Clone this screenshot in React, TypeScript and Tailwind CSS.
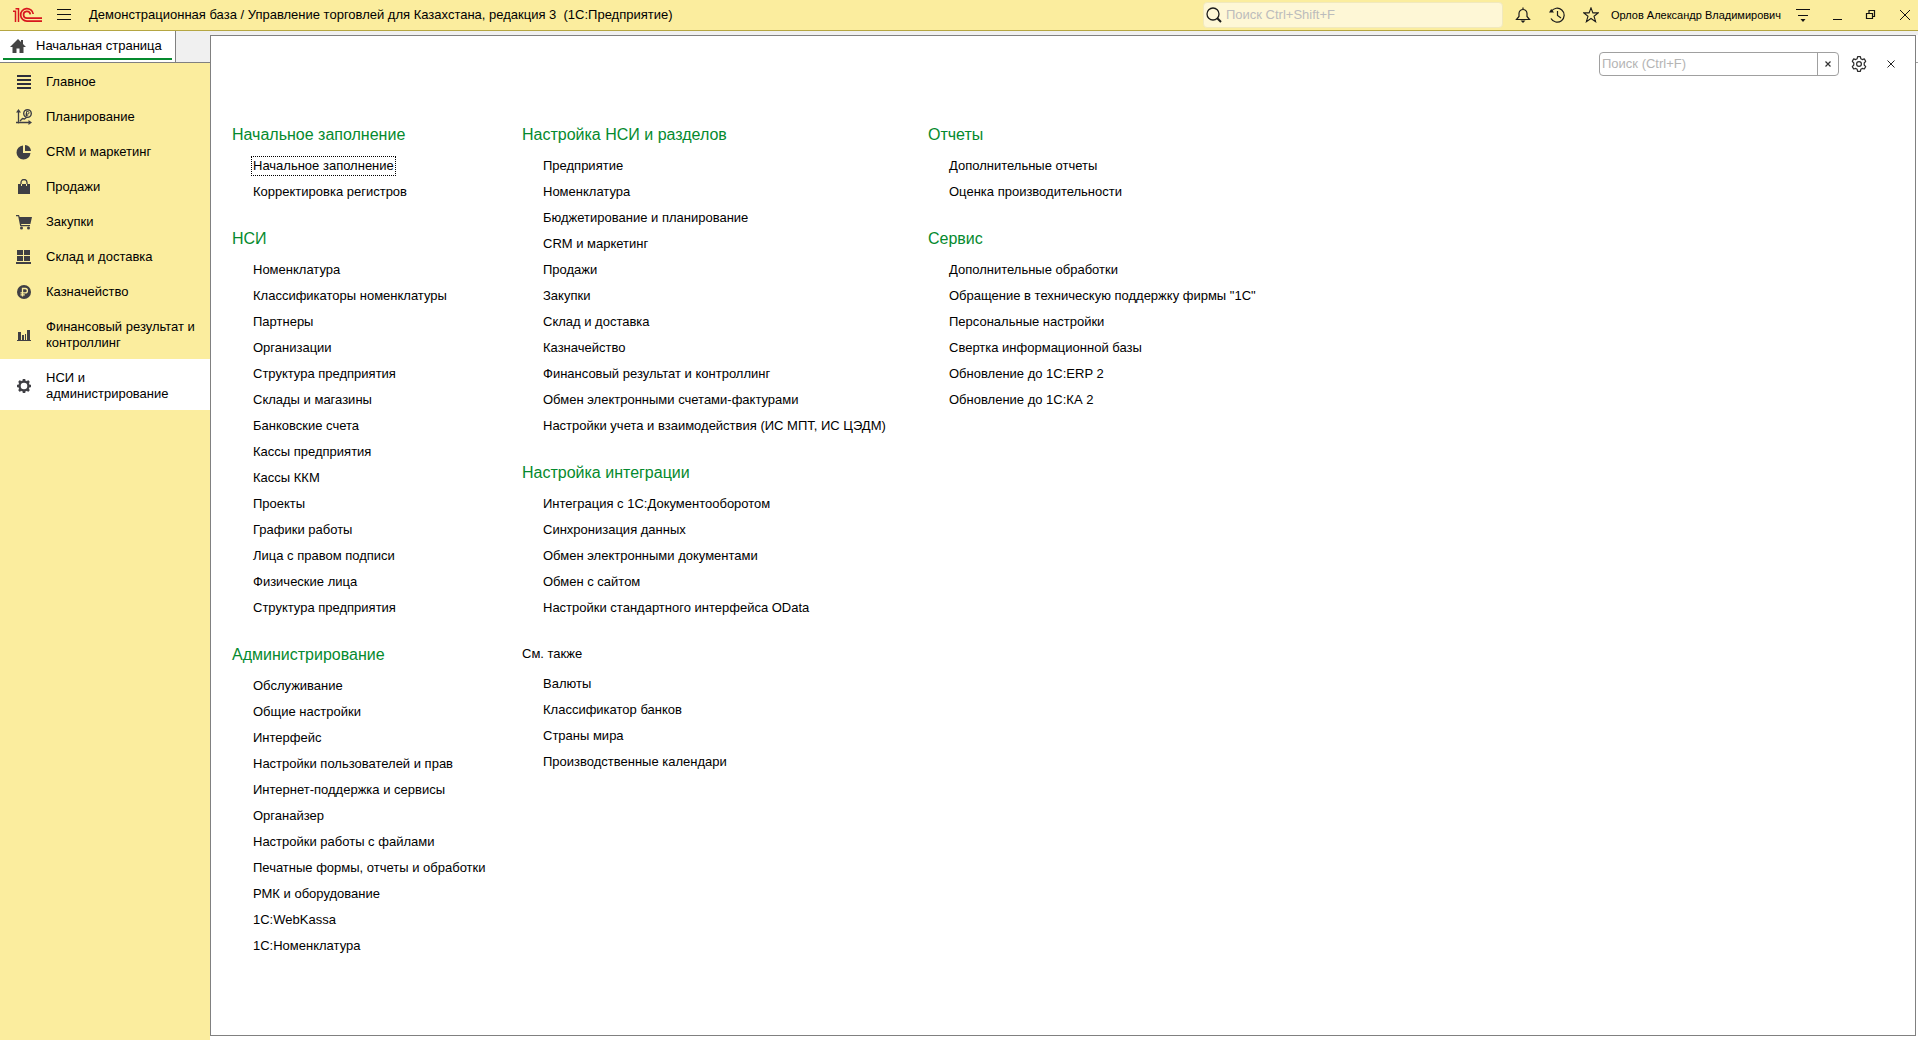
import type { ReactNode } from "react";

type Section = { title: string; muted?: boolean; items: string[] };

const columns: Section[][] = [
  [
    { title: "Начальное заполнение", items: ["Начальное заполнение", "Корректировка регистров"] },
    {
      title: "НСИ",
      items: [
        "Номенклатура",
        "Классификаторы номенклатуры",
        "Партнеры",
        "Организации",
        "Структура предприятия",
        "Склады и магазины",
        "Банковские счета",
        "Кассы предприятия",
        "Кассы ККМ",
        "Проекты",
        "Графики работы",
        "Лица с правом подписи",
        "Физические лица",
        "Структура предприятия",
      ],
    },
    {
      title: "Администрирование",
      items: [
        "Обслуживание",
        "Общие настройки",
        "Интерфейс",
        "Настройки пользователей и прав",
        "Интернет-поддержка и сервисы",
        "Органайзер",
        "Настройки работы с файлами",
        "Печатные формы, отчеты и обработки",
        "РМК и оборудование",
        "1С:WebKassa",
        "1С:Номенклатура",
      ],
    },
  ],
  [
    {
      title: "Настройка НСИ и разделов",
      items: [
        "Предприятие",
        "Номенклатура",
        "Бюджетирование и планирование",
        "CRM и маркетинг",
        "Продажи",
        "Закупки",
        "Склад и доставка",
        "Казначейство",
        "Финансовый результат и контроллинг",
        "Обмен электронными счетами-фактурами",
        "Настройки учета и взаимодействия (ИС МПТ, ИС ЦЭДМ)",
      ],
    },
    {
      title: "Настройка интеграции",
      items: [
        "Интеграция с 1С:Документооборотом",
        "Синхронизация данных",
        "Обмен электронными документами",
        "Обмен с сайтом",
        "Настройки стандартного интерфейса OData",
      ],
    },
    {
      title: "См. также",
      muted: true,
      items: ["Валюты", "Классификатор банков", "Страны мира", "Производственные календари"],
    },
  ],
  [
    { title: "Отчеты", items: ["Дополнительные отчеты", "Оценка производительности"] },
    {
      title: "Сервис",
      items: [
        "Дополнительные обработки",
        'Обращение в техническую поддержку фирмы "1С"',
        "Персональные настройки",
        "Свертка информационной базы",
        "Обновление до 1С:ERP 2",
        "Обновление до 1С:КА 2",
      ],
    },
  ],
];

function Icon({ children, className = "size-4", box = 16 }: { children: ReactNode; className?: string; box?: number }) {
  return (
    <svg viewBox={`0 0 ${box} ${box}`} className={`shrink-0 ${className}`} fill="none" stroke="none" aria-hidden="true">
      {children}
    </svg>
  );
}

const dark = "#3f3f44";

const navigation: { label: string; icon: ReactNode; active?: boolean }[] = [
  {
    label: "Главное",
    icon: <path fill="#2e2e3c" d="M1 1h14v2H1zM1 5h14v2H1zM1 9h14v2H1zM1 13h14v2H1z" />,
  },
  {
    label: "Планирование",
    icon: (
      <>
        <path stroke={dark} strokeWidth="1.3" d="M2.5 2v12.500M0 13.500h14M4 12l2.500-2.500 2 .5L11 8" />
        <path fill={dark} d="M2.500 0 5 3.500H0zM16 13.500 12.500 11v5z" />
        <circle cx="11.500" cy="4.500" r="3.800" stroke={dark} strokeWidth="1.400" />
        <path stroke={dark} d="M10.500 7V2.500h1.300a1.200 1.200 0 0 1 0 2.500H9.500M9.500 6.200h2.700" />
      </>
    ),
  },
  {
    label: "CRM и маркетинг",
    icon: (
      <>
        <path fill={dark} d="M7 1.500V9h7.500A7 7 0 1 1 7 1.500z" />
        <path fill={dark} d="M9 1v6h6a6.200 6.200 0 0 0-6-6z" />
      </>
    ),
  },
  {
    label: "Продажи",
    icon: (
      <>
        <path fill={dark} d="M2 5h12v10H2z" />
        <path stroke={dark} strokeWidth="1.300" d="M5 6V3.500a3 3 0 0 1 6 0V6" />
        <path stroke="#fbed9e" strokeWidth="1" d="M5.500 5v2M10.500 5v2" />
      </>
    ),
  },
  {
    label: "Закупки",
    icon: (
      <>
        <path fill={dark} d="M0 1h3l.7 2H16l-1.600 7H5l.4 1H14v1.200H4.200L2.200 2.300H0z" />
        <circle cx="5.500" cy="14" r="1.500" fill={dark} />
        <circle cx="12.500" cy="14" r="1.500" fill={dark} />
      </>
    ),
  },
  {
    label: "Склад и доставка",
    icon: <path fill={dark} d="M1 1h6v5H1zM8 1h6v5H8zM1 7h6v5H1zM8 7h6v5H8zM0 13h15v2H0z" />,
  },
  {
    label: "Казначейство",
    icon: (
      <>
        <circle cx="8" cy="8" r="7" fill={dark} />
        <path stroke="#fbed9e" strokeWidth="1.300" d="M6.500 12.500v-8h2.700a2.200 2.200 0 0 1 0 4.400H4.500M4.500 10.800h4.300" />
      </>
    ),
  },
  {
    label: "Финансовый результат и контроллинг",
    icon: <path fill={dark} d="M1 13h14v1H1zM2 5h3v8H2zM6 8h2v5H6zM9 7h1v6H9zM11 3h3v10h-3z" />,
  },
  {
    label: "НСИ и администрирование",
    active: true,
    icon: (
      <>
        <circle cx="8" cy="8" r="4.500" stroke={dark} strokeWidth="2.400" />
        <path
          stroke={dark}
          strokeWidth="2.600"
          d="M8 1v2.200M8 12.800V15M1 8h2.200M12.800 8H15M3 3l1.600 1.600M11.400 11.400 13 13M3 13l1.600-1.600M11.400 4.600 13 3"
        />
      </>
    ),
  },
];

function IconButton({ label, children, className }: { label: string; children: ReactNode; className: string }) {
  return (
    <button type="button" aria-label={label} className={`flex h-6 shrink-0 items-center justify-center ${className}`}>
      {children}
    </button>
  );
}

function TitleBar() {
  return (
    <header className="flex h-[31px] shrink-0 items-center border-b border-[#b5a642] bg-[#fbed9e]">
      <svg viewBox="0 0 30 16" className="ml-3 h-4 w-[30px] shrink-0" fill="none" stroke="#d8161d" role="img" aria-label="1С">
        <path strokeWidth="1.500" d="M1 4.200h2.500V15M3.500 1.700h3V15" />
        <path strokeWidth="1.700" d="M21.200 7A6.300 6.300 0 1 0 15 14.200H30" />
        <path strokeWidth="1.700" d="M18.300 7.300A3.400 3.400 0 1 0 15 11.200H30" />
      </svg>
      <IconButton label="Меню" className="ml-3 w-5">
        <Icon>
          <path stroke="#111" d="M1 2.500h14M1 7.500h14M1 12.500h14" />
        </Icon>
      </IconButton>
      <h1 className="ml-[15px] whitespace-pre text-[13px] text-black">
        {"Демонстрационная база / Управление торговлей для Казахстана, редакция 3  (1С:Предприятие)"}
      </h1>
      <label className="ml-auto flex h-[26px] w-[300px] shrink-0 items-center gap-1 rounded-sm border border-[#f1e9bd] bg-[#fef7d6] pl-0.5">
        <Icon>
          <circle cx="7" cy="7" r="6" stroke="#1b1b1b" strokeWidth="1.300" />
          <path stroke="#1b1b1b" strokeWidth="2" d="m11.300 11.300 3.700 3.700" />
        </Icon>
        <input
          type="search"
          aria-label="Поиск"
          placeholder="Поиск Ctrl+Shift+F"
          className="min-w-0 flex-1 bg-transparent text-[13px] outline-none placeholder:text-[#bcbcbc]"
        />
      </label>
      <IconButton label="Уведомления" className="ml-2 w-6">
        <Icon>
          <path stroke="#1b1b1b" strokeWidth="1.200" d="M1.500 12.500h13L12 9.500V6.500a4 4 0 0 0-8 0v3zM8 2.500V.5" />
          <path fill="#1b1b1b" d="M5.500 13.500h5L8 16z" />
        </Icon>
      </IconButton>
      <IconButton label="История" className="ml-2.5 w-6">
        <Icon>
          <path stroke="#1b1b1b" strokeWidth="1.200" d="M2.200 4.500A7 7 0 1 1 2 11.500M8.500 4v4.500l3.500 2.500" />
          <path fill="#1b1b1b" d="M0 5.500h5L2.200 2z" />
        </Icon>
      </IconButton>
      <IconButton label="Избранное" className="ml-2.5 w-6">
        <Icon>
          <path stroke="#1b1b1b" strokeWidth="1.100" d="m8 .9 1.900 5h5.300L11 9.200l1.600 5.500L8 11.500l-4.600 3.200L5 9.200.8 5.900h5.300z" />
        </Icon>
      </IconButton>
      <button type="button" className="ml-2 shrink-0 text-[11px] text-black">
        Орлов Александр Владимирович
      </button>
      <IconButton label="Сервис и настройки" className="ml-2.5 w-6">
        <Icon>
          <path stroke="#111" strokeWidth="1.200" d="M1 2.500h14M3 8.500h10" />
          <path fill="#111" d="M5.500 12h5L8 15z" />
        </Icon>
      </IconButton>
      <IconButton label="Свернуть" className="ml-2.5 w-6">
        <Icon>
          <path stroke="#111" d="M4 12.500h9" />
        </Icon>
      </IconButton>
      <IconButton label="Восстановить" className="ml-2.5 w-6">
        <Icon>
          <path stroke="#111" strokeWidth="1.200" d="M3.500 6.500h6v5h-6zM6 6V3.500h5.500v6H10" />
        </Icon>
      </IconButton>
      <IconButton label="Закрыть" className="mr-px ml-2.5 w-6">
        <Icon>
          <path stroke="#111" d="m3 3 10 10M13 3 3 13" />
        </Icon>
      </IconButton>
    </header>
  );
}

function Sidebar() {
  return (
    <aside className="flex w-[210px] shrink-0 flex-col bg-[#fbed9e]">
      <div className="flex h-8 border-b border-[#808080] bg-[#f0f0f0]">
        <a href="#start" className="flex w-44 flex-col border-r border-[#808080] bg-white px-[3px] pb-0.5">
          <span className="flex flex-1 items-center gap-2.5 pt-[2px] pl-[7px] text-[13px] text-black">
            <Icon>
              <path fill="#444" d="M8 1 0 9h2.500v6h4v-4.500h3V15h4V9H16l-3-3V2h-2v2z" />
            </Icon>
            Начальная страница
          </span>
          <span className="h-0.5 bg-[#058a2e]" />
        </a>
      </div>
      <nav aria-label="Разделы">
        {navigation.map(({ label, icon, active }) => (
          <a
            key={label}
            href="#section"
            aria-current={active ? "page" : undefined}
            className={`flex items-center gap-3.5 pt-2.5 pr-3 pb-2 pl-4 text-[13px] leading-4 text-black ${active ? "bg-white" : ""} ${
              label.length > 22 ? "min-h-[51px]" : "min-h-[35px]"
            }`}
          >
            <Icon>{icon}</Icon>
            <span>{label}</span>
          </a>
        ))}
      </nav>
    </aside>
  );
}

function SectionBlock({ section, focused }: { section: Section; focused: boolean }) {
  return (
    <section>
      {section.muted ? (
        <h2 className="mb-[5px] flex h-6 items-center text-[13px] text-black">{section.title}</h2>
      ) : (
        <h2 className="mb-[5px] flex h-[26px] items-center text-[16px] text-[#058a2e]">{section.title}</h2>
      )}
      <ul className="pl-[19px]">
        {section.items.map((item, index) => (
          <li key={index} className="flex h-[26px] items-center">
            <a
              href="#item"
              className={`border px-px text-[13px] leading-[18px] whitespace-nowrap text-black ${
                focused && index === 0 ? "border-dotted border-black" : "border-transparent"
              }`}
            >
              {item}
            </a>
          </li>
        ))}
      </ul>
    </section>
  );
}

function FunctionsPanel() {
  return (
    <main className="mb-1 flex min-w-0 flex-1 flex-col border border-[#808080] bg-white">
      <div className="flex items-center justify-end pt-4 pr-3.5">
        <div className="flex h-6 w-60 rounded-sm border border-[#a0a0a0]">
          <input
            type="search"
            aria-label="Поиск по панели"
            placeholder="Поиск (Ctrl+F)"
            className="min-w-0 flex-1 bg-transparent pl-0.5 text-[13px] outline-none placeholder:text-[#b4b4b4]"
          />
          <button type="button" aria-label="Очистить" className="flex w-[21px] items-center justify-center border-l border-[#a0a0a0]">
            <Icon className="size-2" box={8}>
              <path stroke="#333" strokeWidth="1.200" d="m1.500 1.500 5 5M6.500 1.500l-5 5" />
            </Icon>
          </button>
        </div>
        <IconButton label="Настройка" className="ml-2 w-6">
          <Icon>
            <path
              stroke="#2b2b2b"
              strokeWidth="1.200"
              strokeLinejoin="round"
              d="M6.600.7h2.800l.4 2 1.500.9 2-.7 1.400 2.400L13.200 7v2l1.500 1.600-1.400 2.400-2-.6-1.500.9-.4 2H6.600l-.4-2-1.500-.9-2 .6-1.400-2.400L2.800 9V7L1.300 5.300l1.400-2.400 2 .7 1.500-.9z"
            />
            <circle cx="8" cy="8" r="2.400" stroke="#2b2b2b" strokeWidth="1.200" />
          </Icon>
        </IconButton>
        <IconButton label="Закрыть панель" className="ml-2.5 w-5">
          <Icon className="size-2" box={8}>
            <path stroke="#222" d="m.5.5 7 7M7.500.5l-7 7" />
          </Icon>
        </IconButton>
      </div>
      <div className="grid grid-cols-[290px_406px_1fr] items-start pt-[46px] pl-[21px]">
        {columns.map((sections, column) => (
          <div key={column} className="flex flex-col gap-[21px]">
            {sections.map((section, index) => (
              <SectionBlock key={section.title} section={section} focused={column === 0 && index === 0} />
            ))}
          </div>
        ))}
      </div>
    </main>
  );
}

export default function App() {
  return (
    <div className="flex min-h-screen flex-col bg-white font-['Liberation_Sans',Arial,sans-serif]">
      <TitleBar />
      <div className="flex flex-1">
        <Sidebar />
        <div className="flex min-w-0 flex-1 border-t-4 border-[#f0f0f0]">
          <FunctionsPanel />
          <div className="h-7 w-0.5 border-b border-[#a0a0a0]" />
        </div>
      </div>
    </div>
  );
}
